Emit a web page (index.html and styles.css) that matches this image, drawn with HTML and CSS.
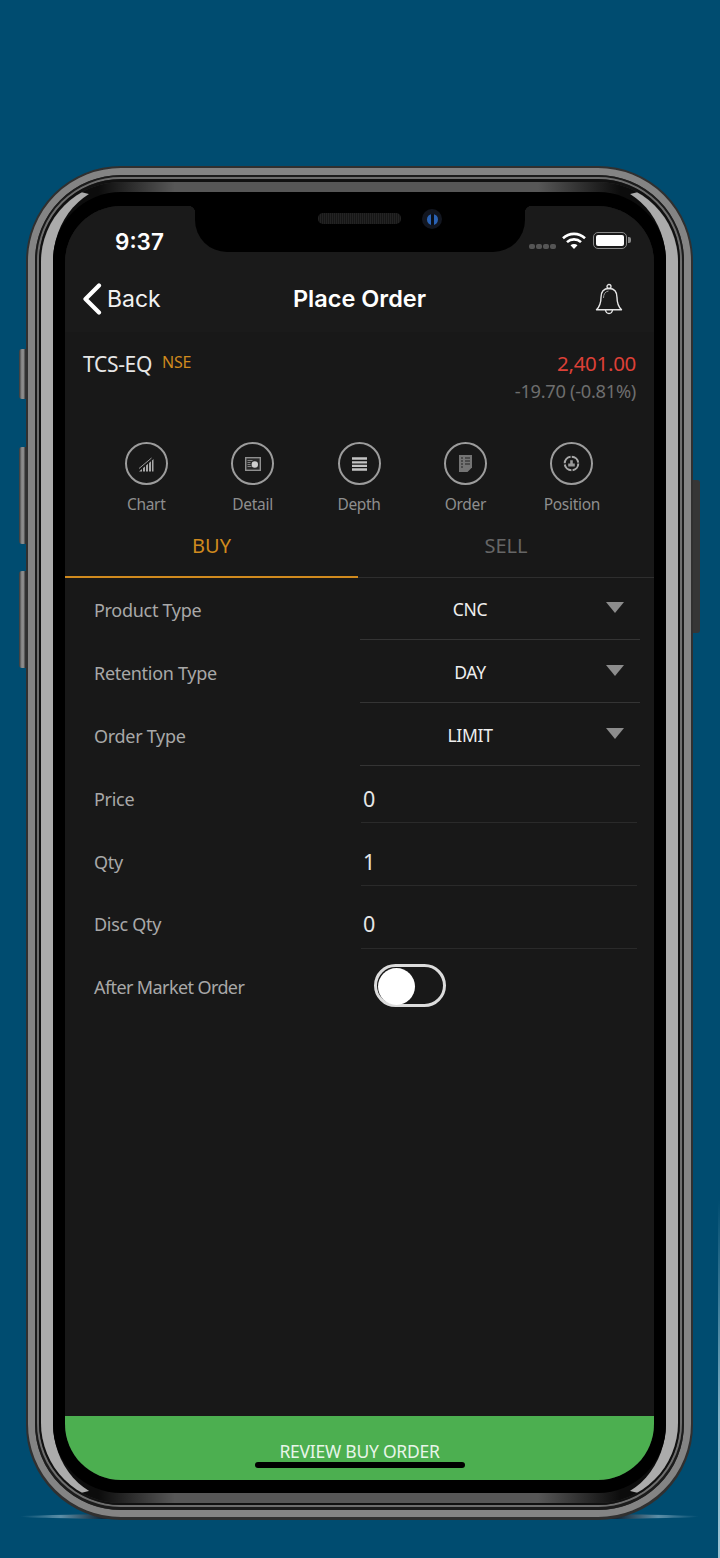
FILE: index.html
```html
<!DOCTYPE html>
<html lang="en">
<head>
    <meta charset="UTF-8">
    <meta name="viewport" content="width=device-width, initial-scale=1.0">
    <title>Place Order</title>
    <link rel="stylesheet" href="styles.css">
</head>
<body>
    <div class="edge-strip"></div>
    <div class="phone-wrap">
        <div class="floor-shadow"></div>
        <span class="side-btn side-btn-mute"></span>
        <span class="side-btn side-btn-up"></span>
        <span class="side-btn side-btn-down"></span>
        <span class="side-btn side-btn-power"></span>
        <div class="phone">
            <div class="rim-a"><div class="rim-b"><div class="rim-c"><div class="rim-d">
                <div class="band">
                    <div class="bezel">
                        <div class="screen">
                            <div class="status-bar">
                                <span class="clock">9:37</span>
                                <div class="status-icons">
                                    <div class="signal"><i></i><i></i><i></i><i></i></div>
                                    <svg class="wifi" width="24" height="17" viewBox="0 0 24 17">
                                        <path d="M1 6.200C7.200.4 16.800.4 23 6.200" fill="none" stroke="#fff" stroke-width="2.600"/>
                                        <path d="M5 10.100c4-3.700 10-3.700 14 0" fill="none" stroke="#fff" stroke-width="2.600"/>
                                        <path d="M8.500 13.200c2-1.700 5-1.700 7 0L12 17z" fill="#fff"/>
                                    </svg>
                                    <div class="battery"><span class="battery-fill"></span></div>
                                </div>
                            </div>
                            <div class="notch">
                                <div class="speaker"></div>
                                <div class="camera"><span></span></div>
                            </div>

                            <div class="nav">
                                <div class="back">
                                    <svg width="20" height="32" viewBox="0 0 20 32">
                                        <path d="M17 2.500 3.500 16 17 29.500" fill="none" stroke="#fff" stroke-width="4.200" stroke-linecap="round" stroke-linejoin="round"/>
                                    </svg>
                                    <span>Back</span>
                                </div>
                                <div class="nav-title">Place Order</div>
                                <svg class="bell" width="28" height="32" viewBox="0 0 28 32">
                                    <path d="M14 5.500c-5.500 0-8 3.800-8 9 0 6-1.800 9.500-4.500 12.300h25c-2.700-2.800-4.500-6.300-4.500-12.300 0-5.200-2.500-9-8-9z" fill="none" stroke="#e6e6e6" stroke-width="1.400" stroke-linejoin="round"/>
                                    <circle cx="14" cy="3.500" r="2" fill="none" stroke="#e6e6e6" stroke-width="1.300"/>
                                    <path d="M10.500 27c.4 2.400 1.700 3.500 3.500 3.500s3.100-1.100 3.500-3.500" fill="none" stroke="#e6e6e6" stroke-width="1.400"/>
                                    <path d="M8.500 15c0-3.800 1.700-6.500 5-7" fill="none" stroke="#9a9a9a" stroke-width="1"/>
                                </svg>
                            </div>

                            <div class="quote">
                                <div class="symbol">
                                    <span class="symbol-name">TCS-EQ</span>
                                    <span class="symbol-exch">NSE</span>
                                </div>
                                <div class="prices">
                                    <div class="price">2,401.00</div>
                                    <div class="change">-19.70 (-0.81%)</div>
                                </div>
                            </div>

                            <div class="actions">
                                <div class="action">
                                    <div class="action-circle">
                                        <svg class="icon-chart" width="15" height="15" viewBox="0 0 15 15">
                                            <path d="M0 14.500 3 12v2.500zM4 11l2-1.600v5.100H4zM7 8.500l2-1.700v7.700H7zM10 6l2-1.800v10.300h-2zM13 3.500l1.500-1.500v12.500H13z" fill="#a8a8a8"/>
                                            <path d="M0 11.500 12.500 1" fill="none" stroke="#9a9a9a" stroke-width="1"/>
                                        </svg>
                                    </div>
                                    <div class="action-label">Chart</div>
                                </div>
                                <div class="action">
                                    <div class="action-circle">
                                        <svg width="16" height="14" viewBox="0 0 16 14">
                                            <rect x=".7" y=".7" width="14.600" height="12.600" fill="#2a2a2a" stroke="#8f8f8f" stroke-width="1.400"/>
                                            <path d="M2.500 3.500h5M2.500 5.500h3M2.500 7.500h3M2.500 9.500h4" stroke="#8d8d8d" stroke-width=".9"/>
                                            <circle cx="9.800" cy="7.500" r="3.200" fill="#cfcfcf"/>
                                        </svg>
                                    </div>
                                    <div class="action-label">Detail</div>
                                </div>
                                <div class="action">
                                    <div class="action-circle">
                                        <svg width="15" height="14" viewBox="0 0 15 14">
                                            <path d="M0 1.500h15M0 5.300h15M0 8.900h15M0 12.500h15" stroke="#c4c4c4" stroke-width="2.300"/>
                                        </svg>
                                    </div>
                                    <div class="action-label">Depth</div>
                                </div>
                                <div class="action">
                                    <div class="action-circle">
                                        <svg width="13" height="17" viewBox="0 0 13 17">
                                            <path d="M0 0h13v12.500L8.500 17H0z" fill="#747474"/>
                                            <path d="M2 3h2M2 6h2M2 9h2M2 12h2M6 3h5M6 6h5M6 9h5" stroke="#222" stroke-width="1"/>
                                        </svg>
                                    </div>
                                    <div class="action-label">Order</div>
                                </div>
                                <div class="action">
                                    <div class="action-circle">
                                        <svg width="17" height="17" viewBox="0 0 17 17">
                                            <circle cx="8.500" cy="8.500" r="6.800" fill="none" stroke="#a8a8a8" stroke-width="2" stroke-dasharray="9.500 1.200"/>
                                            <path d="M5.200 11.500V8.500h2V5.200h2.600v3.300h2v3z" fill="#9a9a9a"/>
                                        </svg>
                                    </div>
                                    <div class="action-label">Position</div>
                                </div>
                            </div>

                            <div class="tabs">
                                <div class="tab tab-active">BUY</div>
                                <div class="tab">SELL</div>
                            </div>

                            <div class="form">
                                <div class="row">
                                    <div class="row-label">Product Type</div>
                                    <div class="select"><span class="select-value">CNC</span><span class="caret"></span></div>
                                </div>
                                <div class="row">
                                    <div class="row-label">Retention Type</div>
                                    <div class="select"><span class="select-value">DAY</span><span class="caret"></span></div>
                                </div>
                                <div class="row">
                                    <div class="row-label">Order Type</div>
                                    <div class="select"><span class="select-value">LIMIT</span><span class="caret"></span></div>
                                </div>
                                <div class="row">
                                    <div class="row-label">Price</div>
                                    <div class="field">0</div>
                                </div>
                                <div class="row">
                                    <div class="row-label">Qty</div>
                                    <div class="field">1</div>
                                </div>
                                <div class="row row-tight">
                                    <div class="row-label">Disc Qty</div>
                                    <div class="field field-tall">0</div>
                                </div>
                                <div class="row">
                                    <div class="row-label row-label-long">After Market Order</div>
                                    <div class="toggle"><span class="toggle-knob"></span></div>
                                </div>
                            </div>

                            <div class="review-btn">REVIEW BUY ORDER</div>
                            <div class="home-bar"></div>
                        </div>
                    </div>
                </div>
            </div></div></div></div>
        </div>
    </div>
</body>
</html>
```

FILE: styles.css
```css
* {
    box-sizing: border-box;
}
body {
    position: relative;
    margin: 0;
    height: 1558px;
    overflow: hidden;
    background: #004c70;
    font-family: "Noto Sans", sans-serif;
    letter-spacing: -0.3px;
}
.edge-strip {
    position: absolute;
    right: 0;
    top: 1200px;
    bottom: 0;
    width: 2px;
    background: linear-gradient(180deg, rgba(130, 180, 200, 0), #7fb0c4 60%, #9cc4d4);
}
.phone-wrap {
    position: relative;
    top: 166px;
    width: 667px;
    height: 1354px;
    margin-left: 26px;
}
.floor-shadow {
    position: absolute;
    left: -6px;
    right: -6px;
    bottom: 0;
    height: 7px;
    border-radius: 50%;
    background: linear-gradient(90deg, rgba(130, 170, 190, 0) 0, rgba(130, 170, 190, 0.7) 6%, #14293a 12%, #14293a 88%, rgba(130, 170, 190, 0.7) 94%, rgba(130, 170, 190, 0) 100%);
}
.side-btn {
    position: absolute;
    width: 8px;
    background: linear-gradient(90deg, #333, #8c8c8c 35%, #8c8c8c 55%, #333 80%);
    border-radius: 3px 0 0 3px;
}
.side-btn-mute { left: -7px; top: 183px; height: 50px; }
.side-btn-up { left: -7px; top: 281px; height: 97px; }
.side-btn-down { left: -7px; top: 405px; height: 97px; }
.side-btn-power {
    right: -7px;
    top: 314px;
    height: 153px;
    background: #363636;
    border-radius: 0 3px 3px 0;
}

/* frame, from outside in */
.phone {
    position: relative;
    height: 100%;
    border: 2px solid #303030;
    border-bottom-width: 3px;
    border-radius: 95px;
    background: #303030;
}
.rim-a {
    height: 100%;
    border: 7px solid #848484;
    border-radius: 93px;
}
.rim-b {
    height: 100%;
    border: 2px solid #1c1c1c;
    border-bottom-width: 3px;
    border-radius: 86px;
}
.rim-c {
    height: 100%;
    border: 2px solid #6e6e6e;
    border-radius: 84px;
}
.rim-d {
    height: 100%;
    border: 2px solid #111;
    border-top-width: 3px;
    border-radius: 82px;
}
.band {
    height: 100%;
    padding: 7px 0;
    border-style: solid;
    border-width: 3px 12px;
    border-color: transparent #ababab;
    border-radius: 80px;
    background: linear-gradient(90deg, #0c0c0c 9%, #575757 21%, #575757 78%, #0c0c0c 91%);
    background-origin: border-box;
}
.bezel {
    height: 100%;
    padding: 14px 12px 13px;
    background: #000;
    border-radius: 68px;
}
.screen {
    position: relative;
    display: flex;
    flex-direction: column;
    height: 100%;
    overflow: hidden;
    background: #181818;
    border-radius: 56px;
}

/* status bar */
.status-bar {
    display: flex;
    justify-content: space-between;
    height: 59px;
    padding: 23px 27px 0 50px;
    background: #1a1a1a;
    color: #fff;
    font-family: "Inter", sans-serif;
    letter-spacing: 0;
}
.clock {
    font-size: 22.500px;
    font-weight: 600;
    line-height: 26px;
}
.status-icons {
    display: flex;
    align-items: flex-start;
    padding-top: 3px;
}
.signal {
    display: flex;
    gap: 1px;
    margin-top: 12px;
    margin-right: 6px;
}
.signal i {
    width: 6px;
    height: 5px;
    border-radius: 2px;
    background: #555;
}
.wifi {
    margin-right: 7px;
}
.battery {
    position: relative;
    width: 34px;
    height: 17px;
    padding: 2px;
    border: 1.500px solid #8a8a8a;
    border-radius: 5px;
}
.battery::after {
    content: "";
    position: absolute;
    right: -5px;
    top: 4px;
    width: 3px;
    height: 6px;
    border-radius: 0 2px 2px 0;
    background: #8a8a8a;
}
.battery-fill {
    display: block;
    height: 100%;
    background: #fff;
    border-radius: 2px;
}
.notch {
    position: absolute;
    left: 130px;
    top: 0;
    display: flex;
    justify-content: center;
    align-items: flex-start;
    gap: 21px;
    width: 330px;
    height: 46px;
    padding: 7px 0 0 40px;
    background: #000;
    border-radius: 0 0 32px 32px;
}
.notch::before,
.notch::after {
    content: "";
    position: absolute;
    top: 0;
    width: 7px;
    height: 7px;
}
.notch::before {
    left: -7px;
    background: radial-gradient(circle at 0 100%, transparent 7px, #000 7.500px);
}
.notch::after {
    right: -7px;
    background: radial-gradient(circle at 100% 100%, transparent 7px, #000 7.500px);
}
.speaker {
    width: 83px;
    height: 11px;
    border-radius: 5px;
    background: repeating-linear-gradient(90deg, #232323 0 1px, #161616 1px 2px);
}
.camera {
    display: flex;
    justify-content: center;
    align-items: center;
    width: 20px;
    height: 20px;
    margin-top: -4px;
    border-radius: 50%;
    background: #121620;
}
.camera span {
    width: 11px;
    height: 11px;
    border-radius: 50%;
    background: linear-gradient(90deg, #2a62b4 0 40%, #0a0f18 40% 60%, #2a62b4 60%);
}

/* nav */
.nav {
    position: relative;
    display: flex;
    align-items: center;
    justify-content: space-between;
    height: 67px;
    padding: 0 31px 0 17px;
    background: #1a1a1a;
    letter-spacing: 0;
}
.back {
    display: flex;
    align-items: center;
    gap: 5px;
    color: #f2f2f2;
    font-family: "Inter", sans-serif;
    font-size: 23px;
}
.nav-title {
    position: absolute;
    left: 0;
    right: 0;
    text-align: center;
    color: #fff;
    font-family: "Inter", sans-serif;
    font-size: 23.500px;
    font-weight: 600;
}

/* quote */
.quote {
    display: flex;
    justify-content: space-between;
    height: 110px;
    padding: 17px 18px 0 18px;
}
.symbol {
    display: flex;
    align-items: flex-start;
    gap: 10px;
}
.symbol-name {
    color: #e6e6e6;
    font-size: 21px;
    line-height: 30px;
}
.symbol-exch {
    color: #d08a1e;
    font-size: 16px;
    line-height: 27px;
}
.prices {
    text-align: right;
}
.price {
    color: #dd4037;
    font-size: 20.500px;
    line-height: 28px;
}
.change {
    color: #6e6e6e;
    font-size: 18.300px;
    line-height: 28px;
}

/* shortcuts */
.actions {
    display: flex;
    height: 84px;
    padding: 0 29px 0 28px;
}
.action {
    flex: 1;
    display: flex;
    flex-direction: column;
    align-items: center;
}
.action-circle {
    display: flex;
    justify-content: center;
    align-items: center;
    width: 43px;
    height: 43px;
    border: 2px solid #9c9c9c;
    border-radius: 50%;
}
.icon-chart {
    margin-top: 2px;
}
.action-label {
    margin-top: 8px;
    color: #8e8e8e;
    font-size: 15.500px;
    line-height: 22px;
}

/* buy sell */
.tabs {
    display: flex;
    height: 52px;
    border-bottom: 1px solid #2e2e2e;
}
.tab {
    flex: 1;
    padding-top: 5px;
    text-align: center;
    color: #666;
    font-size: 20px;
    letter-spacing: 0;
    line-height: 30px;
}
.tab-active {
    flex: none;
    width: 293px;
    height: 52px;
    color: #d08a1e;
    border-bottom: 2px solid #d08a1e;
}

/* form */
.form {
    flex: 1;
    padding-left: 29px;
}
.row {
    display: flex;
    align-items: center;
    height: 63px;
}
.row-tight {
    margin-top: -1px;
}
.row-label {
    width: 266px;
    color: #a8a8a8;
    font-size: 18px;
}
.row-label-long {
    letter-spacing: -0.6px;
}
.select {
    display: flex;
    align-items: center;
    width: 280px;
    height: 60px;
    border-bottom: 1px solid #343434;
}
.select-value {
    width: 220px;
    text-align: center;
    color: #eee;
    font-size: 17.500px;
}
.caret {
    width: 0;
    height: 0;
    margin: -4px 0 0 26px;
    border-style: solid;
    border-width: 11px 9px 0;
    border-color: #8c8c8c transparent transparent;
}
.field {
    display: flex;
    align-items: center;
    width: 276px;
    height: 49px;
    margin-left: 1px;
    padding-left: 2px;
    border-bottom: 1px solid #2a2a2a;
    color: #e6e6e6;
    font-size: 21.500px;
}
.field-tall {
    height: 51px;
}
.toggle {
    width: 72px;
    height: 43px;
    margin: -3px 0 0 14px;
    padding: 1px;
    border: 3px solid #dcdcdc;
    border-radius: 22px;
}
.toggle-knob {
    display: block;
    width: 37px;
    height: 37px;
    border-radius: 50%;
    background: #fff;
}

/* bottom */
.review-btn {
    height: 64px;
    padding-top: 23px;
    text-align: center;
    background: #4caf50;
    color: #e8f5e9;
    font-size: 17.500px;
    letter-spacing: -0.25px;
    line-height: 24px;
}
.home-bar {
    position: absolute;
    left: 190px;
    bottom: 12px;
    width: 210px;
    height: 6px;
    border-radius: 3px;
    background: #000;
}
```
